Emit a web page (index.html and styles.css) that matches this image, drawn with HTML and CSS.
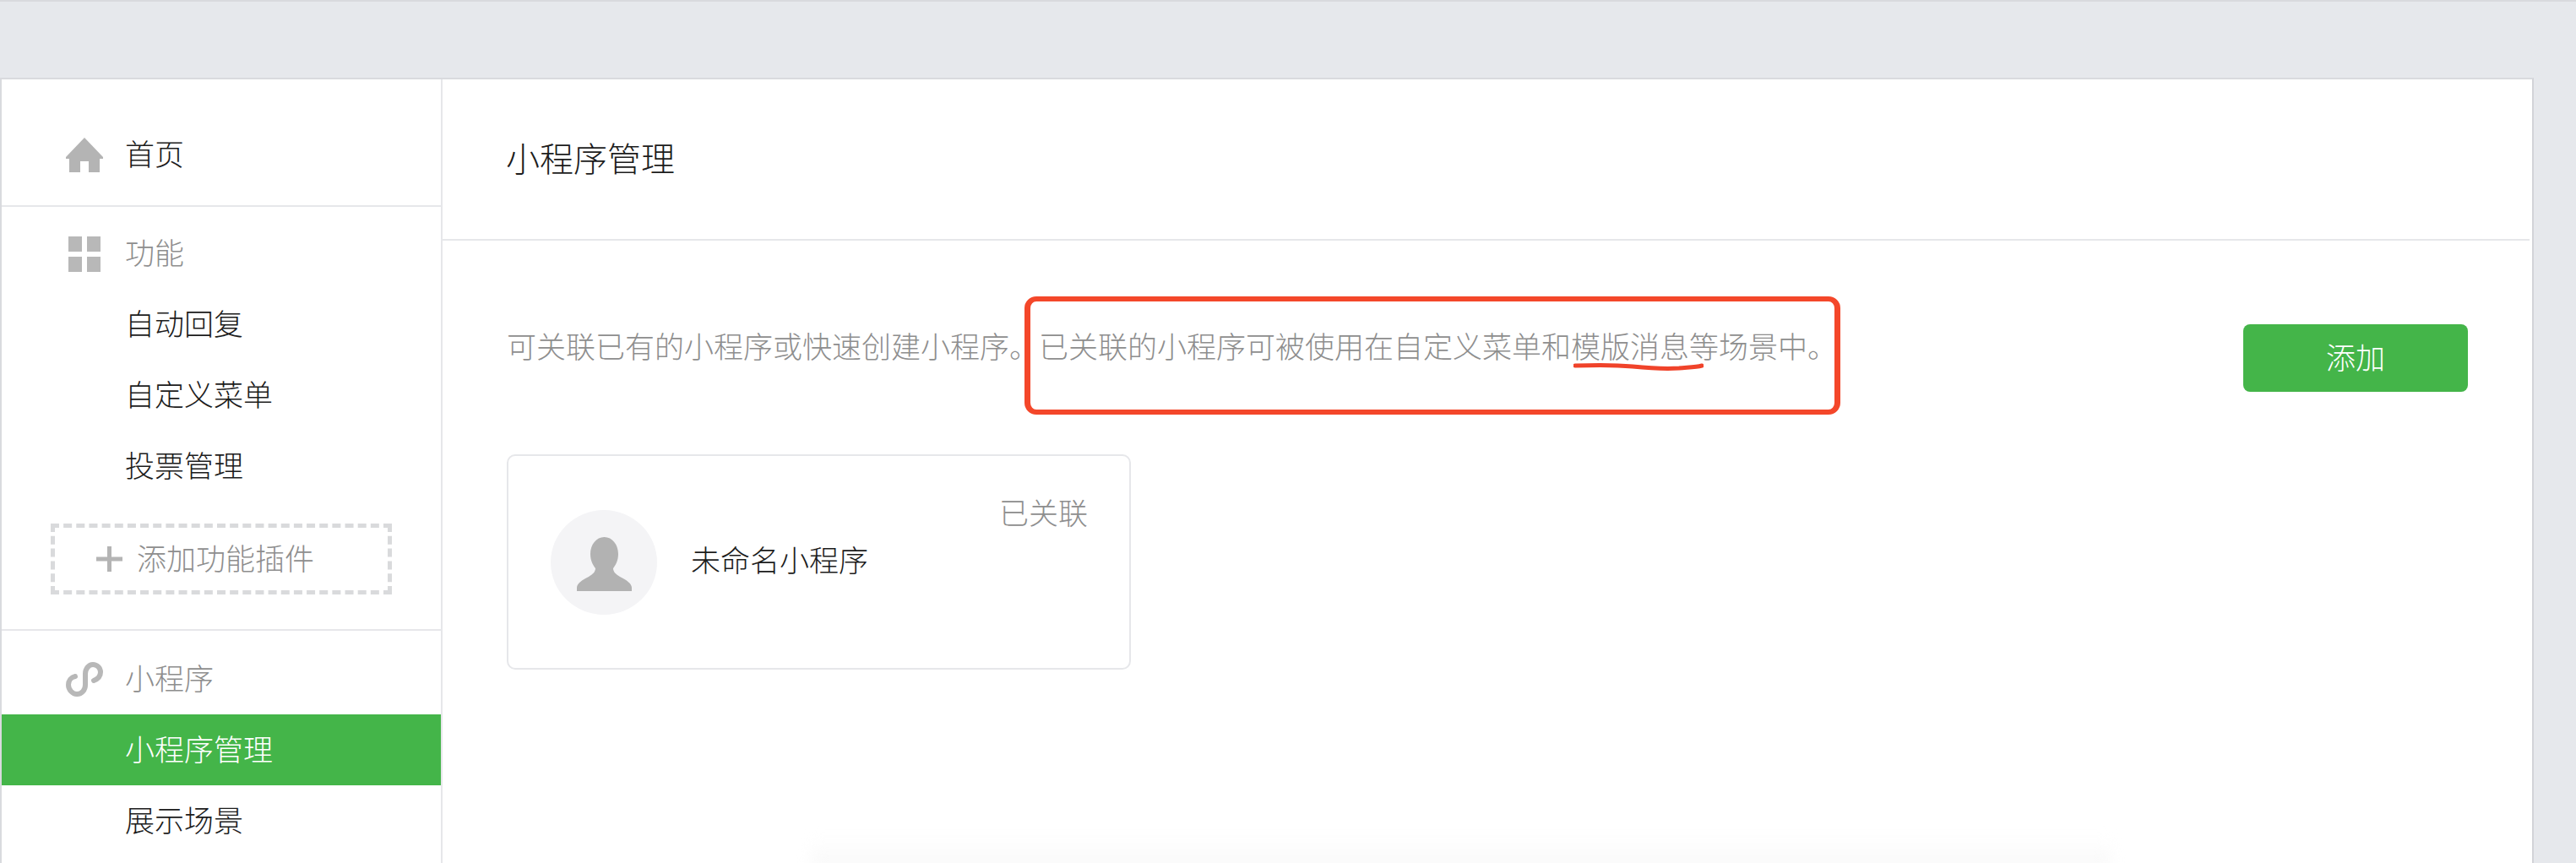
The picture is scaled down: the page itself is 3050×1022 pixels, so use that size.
FILE: index.html
```html
<!doctype html>
<html lang="zh-CN">
<head>
  <title>小程序管理</title>
  <meta charset="utf-8">
  <link rel="stylesheet" href="styles.css">
</head>
<body>

<div class="panel">

  <div class="sidebar">
    <div class="nav-group nav-home">
      <div class="nav-row">
        <svg class="nav-icon" viewBox="0 0 44 41"><path d="M22 0L44 23V25H40V41H27V28H17V41H4V25H0V23Z"/></svg>
        <span class="nav-text">首页</span>
      </div>
    </div>

    <div class="nav-group nav-func">
      <div class="nav-row nav-title">
        <div class="nav-icon grid-icon"><i></i><i></i><i></i><i></i></div>
        <span>功能</span>
      </div>
      <div class="nav-row nav-sub">自动回复</div>
      <div class="nav-row nav-sub">自定义菜单</div>
      <div class="nav-row nav-sub">投票管理</div>
      <div class="add-plugin">
        <svg class="plus" viewBox="0 0 31 30"><path d="M13 0h5v12.500h13v5H18V30h-5V17.500H0v-5h13z"/></svg>
        <span>添加功能插件</span>
      </div>
    </div>

    <div class="nav-group nav-mini">
      <div class="nav-row nav-title">
        <svg class="nav-icon" viewBox="0 0 44 41"><path class="mini-path" d="M11 17C6 18 3 22 3 27C3 33 8 38 13 38C19 38 23 33 23 27V14C23 8 27 3 32 3C37 3 41 7 41 12C41 17 38 20 33 22"/></svg>
        <span>小程序</span>
      </div>
      <div class="nav-row nav-sub active">小程序管理</div>
      <div class="nav-row nav-sub">展示场景</div>
    </div>
  </div>

  <div class="main">
    <div class="main-head">小程序管理</div>

    <div class="content">
      <div class="intro">
        <p class="intro-text">可关联已有的小程序或快速创建小程序。已关联的小程序可被使用在自定义菜单和<span class="marked">模版消息<svg class="scribble" viewBox="0 0 154 12"><path d="M2 5C30 4 50 4 70 6C90 8 110 9 125 8C135 7 145 7 152 5"/></svg></span>等场景中。</p>
        <div class="btn-add">添加</div>
      </div>

      <div class="card">
        <div class="avatar">
          <svg class="avatar-icon" viewBox="0 0 65 64"><path d="M32.500 0C23 0 16 9 16 20C16 28 19 33 22 37C22 41 19 44 14 47C6 51 0 55 0 60V64H65V60C65 55 59 51 51 47C46 44 43 41 43 37C46 33 49 28 49 20C49 9 42 0 32.500 0Z"/></svg>
        </div>
        <div class="card-name">未命名小程序</div>
        <div class="card-status">已关联</div>
      </div>

      <div class="red-box"></div>
    </div>
  </div>

</div>

<div class="bottom-fade"></div>

</body>
</html>
```

FILE: styles.css
```css
html, body {
  height: 100%;
}

body {
  margin: 0;
  background: #e6e8ec;
  border-top: 2px solid #d9dade;
  box-sizing: border-box;
  color: #1c1c1c;
  font-family: "Noto Sans CJK SC", "Noto Sans", sans-serif;
  font-size: 35px;
  font-weight: 300;
  overflow: hidden;
  position: relative;
}

/* frame */
.panel {
  display: flex;
  width: 3000px;
  height: 930px;
  margin-top: 90px;
  background: #fff;
  border-top: 2px solid #d9dade;
  border-left: 2px solid #d9dade;
  border-right: 2px solid #d2d3d8;
  box-sizing: border-box;
  overflow: hidden;
}

/* sidebar */
.sidebar {
  width: 522px;
  flex: none;
  border-right: 2px solid #e6e7ea;
  box-sizing: border-box;
}

.nav-group {
  border-bottom: 2px solid #e6e7ea;
}

.nav-home {
  padding: 47px 0 18px;
}

.nav-func {
  padding: 13px 0 41px;
}

.nav-mini {
  padding-top: 15px;
  border-bottom: 0;
}

.nav-row {
  display: flex;
  align-items: center;
  height: 84px;
  padding: 0 0 5px 76px;
  gap: 26px;
  box-sizing: border-box;
}

.nav-title {
  color: #8e8e8e;
}

.nav-sub {
  padding-left: 146px;
}

.nav-sub.active {
  background: #44b549;
  color: #fff;
}

.nav-icon {
  width: 44px;
  height: 41px;
  flex: none;
  margin-top: 5px;
  fill: #b4b4b4;
}

.grid-icon {
  display: grid;
  grid-template-columns: 16px 16px;
  grid-template-rows: 18px 18px;
  gap: 6px 6px;
  justify-content: center;
}

.grid-icon i {
  background: #b8b8b8;
}

.mini-path {
  fill: none;
  stroke: #b8b8b8;
  stroke-width: 6;
  stroke-linecap: round;
}

.add-plugin {
  display: flex;
  align-items: center;
  gap: 17px;
  width: 404px;
  height: 84px;
  margin: 26px 0 0 58px;
  padding: 0 0 6px 49px;
  border: 5px dashed #d9dadc;
  box-sizing: border-box;
  color: #8e8e8e;
}

.plus {
  width: 31px;
  height: 30px;
  margin-top: 6px;
  fill: #b4b4b4;
}

/* main column */
.main {
  flex: 1;
  display: flex;
  flex-direction: column;
}

.main-head {
  display: flex;
  align-items: center;
  height: 191px;
  padding: 0 0 5px 75px;
  margin-right: 3px;
  border-bottom: 2px solid #e6e7ea;
  box-sizing: border-box;
  font-size: 40px;
}

.content {
  position: relative;
  padding: 99px 76px 0 76px;
}

.intro {
  display: flex;
  justify-content: space-between;
  align-items: flex-start;
}

.intro-text {
  margin: 0;
  color: #8e8e8e;
  line-height: 50px;
}

.marked {
  position: relative;
}

.scribble {
  position: absolute;
  left: 3px;
  bottom: -6px;
  width: 154px;
  height: 12px;
  fill: none;
  stroke: #f0432a;
  stroke-width: 5;
  stroke-linecap: round;
}

.btn-add {
  width: 266px;
  height: 80px;
  background: #44b549;
  border-radius: 8px;
  color: #fff;
  line-height: 76px;
  text-align: center;
}

.card {
  display: flex;
  align-items: flex-start;
  width: 739px;
  height: 255px;
  margin-top: 74px;
  padding: 36px 49px 0 50px;
  border: 2px solid #e6e7ea;
  border-radius: 10px;
  box-sizing: border-box;
}

.avatar {
  display: flex;
  align-items: center;
  justify-content: center;
  width: 126px;
  height: 124px;
  flex: none;
  margin-top: 28px;
  background: #f4f4f6;
  border-radius: 50%;
}

.avatar-icon {
  width: 65px;
  height: 64px;
  fill: #b2b2b2;
  margin-top: 4px;
}

.card-name {
  flex: 1;
  margin: 28px 0 0 40px;
  line-height: 116px;
}

.card-status {
  color: #8e8e8e;
  line-height: 60px;
}

/* annotation drawn over the text */
.red-box {
  position: absolute;
  left: 689px;
  top: 66px;
  width: 966px;
  height: 140px;
  border-style: solid;
  border-color: #f4472a;
  border-width: 6px 7px;
  border-radius: 14px;
  box-sizing: border-box;
}

.bottom-fade {
  position: absolute;
  left: 960px;
  bottom: -6px;
  width: 1540px;
  height: 36px;
  background: linear-gradient(to bottom, rgba(248, 248, 248, 0), #f8f8f8);
  filter: blur(8px);
}
```
